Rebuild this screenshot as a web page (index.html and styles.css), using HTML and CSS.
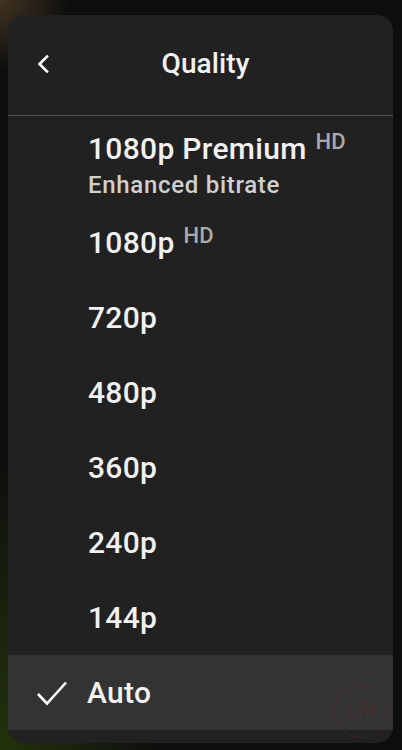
FILE: index.html
```html
<!DOCTYPE html>
<html lang="en">
<head>
    <meta charset="UTF-8">
    <title>Quality</title>
    <meta name="viewport" content="width=device-width, initial-scale=1">
    <link rel="stylesheet" href="styles.css">
</head>
<body>
    <main class="sheet">
        <header class="sheet-head">
            <button class="back" aria-label="Back">
                <svg width="16" height="20" viewBox="0 0 16 20">
                    <path d="M11 2.5 L3.5 10 L11 17.5" fill="none" stroke="#fff" stroke-width="2.6" stroke-linecap="square"/>
                </svg>
            </button>
            <h1 class="title">Quality</h1>
        </header>
        <ul class="options">
            <li class="option premium">
                <span class="label">1080p Premium<sup class="hd">HD</sup></span>
                <span class="sub">Enhanced bitrate</span>
            </li>
            <li class="option"><span class="label">1080p<sup class="hd">HD</sup></span></li>
            <li class="option"><span class="label">720p</span></li>
            <li class="option"><span class="label">480p</span></li>
            <li class="option"><span class="label">360p</span></li>
            <li class="option"><span class="label">240p</span></li>
            <li class="option"><span class="label">144p</span></li>
            <li class="option selected">
                <svg class="check" width="32" height="26" viewBox="0 0 32 26">
                    <path d="M2 14 L11 23.5 L30 2.5" fill="none" stroke="#fff" stroke-width="2.6"/>
                </svg>
                <span class="label">Auto</span>
            </li>
        </ul>
        <div class="watermark">LM</div>
    </main>
</body>
</html>
```

FILE: styles.css
```css
* {
    box-sizing: border-box;
}
body {
    margin: 0;
    height: 750px;
    overflow: hidden;
    font-family: Roboto, "Liberation Sans", sans-serif;
    color: #f1f1f1;
    background:
        radial-gradient(circle at 0 0, rgba(70, 55, 35, 0.9), rgba(40, 30, 20, 0) 70px),
        radial-gradient(ellipse at 0 100%, rgba(40, 60, 10, 0.8), rgba(20, 30, 5, 0) 160px),
        #0e0e0e;
}
.sheet {
    position: relative;
    margin: 15px 9px 0 8px;
    height: 728px;
    background: #212121;
    border-radius: 16px;
    overflow: hidden;
}
.sheet-head {
    display: flex;
    align-items: center;
    height: 101px;
    padding: 0 0 3px 28px;
    border-bottom: 1px solid #505050;
}
.back {
    all: unset;
    display: flex;
    width: 16px;
    cursor: pointer;
}
.title {
    flex: 1;
    margin: 0 34px 0 0;
    text-align: center;
    font-size: 28px;
    font-weight: 500;
    letter-spacing: 0.1px;
}
.options {
    list-style: none;
    margin: 0;
    padding: 0;
}
.option {
    display: flex;
    align-items: center;
    height: 75px;
    padding-left: 80px;
    font-size: 30px;
    font-weight: 500;
    line-height: 34px;
    letter-spacing: 0.3px;
}
.option.premium {
    flex-direction: column;
    align-items: flex-start;
    height: 89px;
    padding-top: 16px;
}
.label {
    white-space: nowrap;
}
.hd {
    margin-left: 9px;
    font-size: 22px;
    line-height: 0;
    vertical-align: 10px;
    letter-spacing: 0;
    color: #aaa;
}
.sub {
    margin-top: 5px;
    font-size: 24px;
    line-height: 28px;
    letter-spacing: 0.7px;
    color: #d0d0d0;
}
.selected {
    position: relative;
    padding-left: 0;
    background: #333;
}
.check {
    margin: 0 19px 0 28px;
}
.watermark {
    position: absolute;
    right: 5px;
    bottom: 5px;
    width: 54px;
    height: 54px;
    border: 1.5px solid rgba(150, 40, 40, 0.25);
    border-radius: 50%;
    color: rgba(150, 40, 40, 0.2);
    font-family: "DejaVu Sans", sans-serif;
    font-style: italic;
    font-size: 22px;
    line-height: 51px;
    text-align: center;
}
```
